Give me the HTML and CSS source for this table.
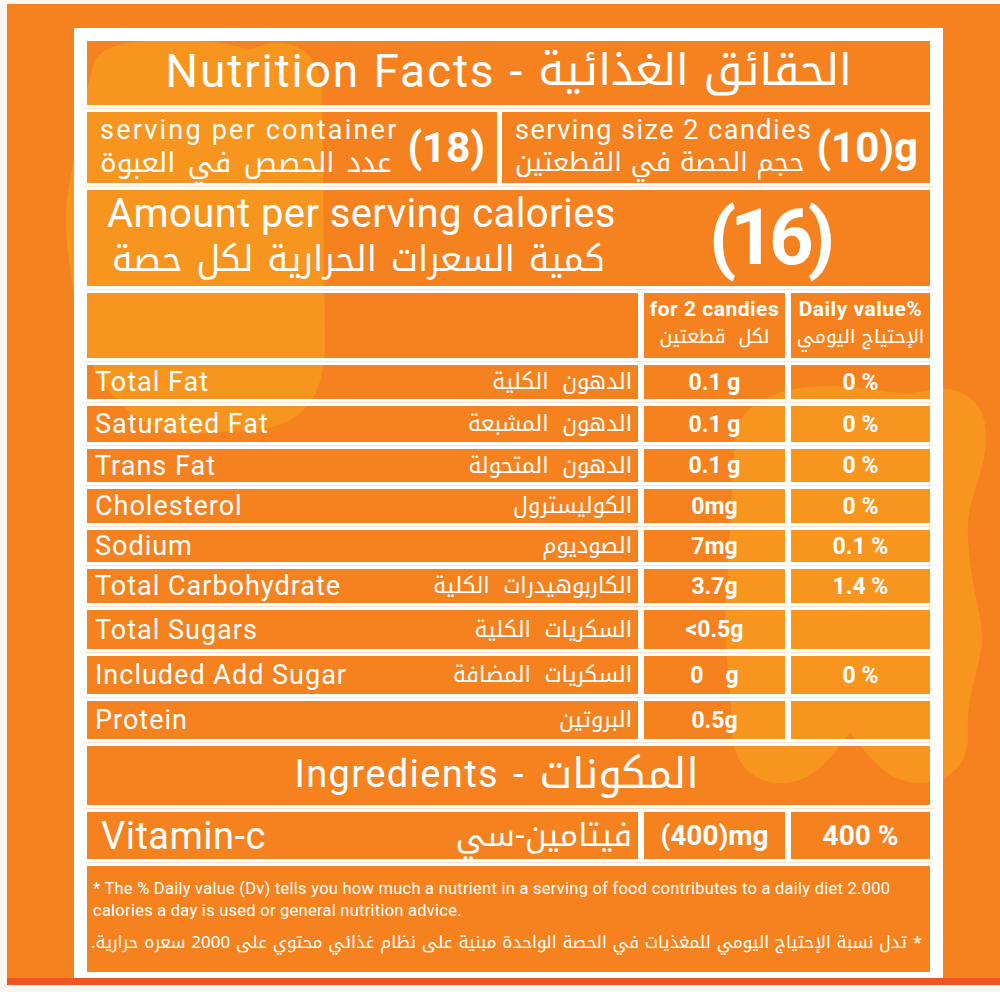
FILE: index.html
```html
<!DOCTYPE html>
<html lang="en">
<head>
<meta charset="utf-8">
<title>Nutrition Facts</title>
<link rel="stylesheet" href="styles.css">
</head>
<body>
<div class="page">
  <svg class="blobs" viewBox="7 4 993 988" width="993" height="988" aria-hidden="true">
    <path d="M95 60 C110 38 150 40 200 41 C240 42 245 55 262 45 C290 38 318 48 322 90 L325 340 C326 400 300 428 250 430 C200 432 180 440 150 425 C110 405 80 360 75 300 C68 260 62 220 70 180 C78 140 85 90 95 60 Z"/>
    <path d="M735 440 C738 398 790 384 840 386 C880 388 900 398 930 390 C962 384 988 402 986 440 C984 480 965 500 968 540 C972 600 986 620 981 650 C976 680 966 700 968 736 C968 768 945 783 920 783 C890 783 872 762 850 732 C828 762 812 783 780 783 C752 783 732 762 732 728 C732 690 722 640 726 600 C729 560 732 480 735 440 Z"/>
  </svg>
  <div class="frame">
    <div class="label">
      <div class="cell title"><span class="en">Nutrition Facts</span><span class="dash">-</span><span class="ar" dir="rtl">الحقائق الغذائية</span></div>

      <div class="row serving">
        <div class="cell serve wide">
          <div class="serve-text">
            <div class="en">serving per container</div>
            <div class="ar" dir="rtl">عدد الحصص في العبوة</div>
          </div>
          <div class="serve-num">(18)</div>
        </div>
        <div class="cell serve">
          <div class="serve-text">
            <div class="en">serving size 2 candies</div>
            <div class="ar" dir="rtl">حجم الحصة في القطعتين</div>
          </div>
          <div class="serve-num">(10)g</div>
        </div>
      </div>

      <div class="cell calories">
        <div class="cal-text">
          <div class="en">Amount per serving calories</div>
          <div class="ar" dir="rtl">كمية السعرات الحرارية لكل حصة</div>
        </div>
        <div class="cal-num">(16)</div>
      </div>

      <div class="row cols">
        <div class="cell"></div>
        <div class="cell head">
          <div class="en">for 2 candies</div>
          <div class="ar" dir="rtl">لكل&nbsp;&nbsp;قطعتين</div>
        </div>
        <div class="cell head">
          <div class="en">Daily value%</div>
          <div class="ar" dir="rtl">الإحتياج اليومي</div>
        </div>
      </div>

      <div class="row cols">
        <div class="cell name"><span class="en">Total Fat</span><span class="ar" dir="rtl">الدهون الكلية</span></div>
        <div class="cell val">0.1 g</div>
        <div class="cell val">0 %</div>
      </div>
      <div class="row cols">
        <div class="cell name"><span class="en">Saturated Fat</span><span class="ar" dir="rtl">الدهون المشبعة</span></div>
        <div class="cell val">0.1 g</div>
        <div class="cell val">0 %</div>
      </div>
      <div class="row cols">
        <div class="cell name"><span class="en">Trans Fat</span><span class="ar" dir="rtl">الدهون المتحولة</span></div>
        <div class="cell val">0.1 g</div>
        <div class="cell val">0 %</div>
      </div>
      <div class="row cols">
        <div class="cell name"><span class="en">Cholesterol</span><span class="ar" dir="rtl">الكوليسترول</span></div>
        <div class="cell val">0mg</div>
        <div class="cell val">0 %</div>
      </div>
      <div class="row cols">
        <div class="cell name"><span class="en">Sodium</span><span class="ar" dir="rtl">الصوديوم</span></div>
        <div class="cell val">7mg</div>
        <div class="cell val">0.1 %</div>
      </div>
      <div class="row cols">
        <div class="cell name"><span class="en">Total Carbohydrate</span><span class="ar" dir="rtl">الكاربوهيدرات الكلية</span></div>
        <div class="cell val">3.7g</div>
        <div class="cell val">1.4 %</div>
      </div>
      <div class="row cols">
        <div class="cell name"><span class="en">Total Sugars</span><span class="ar" dir="rtl">السكريات الكلية</span></div>
        <div class="cell val">&lt;0.5g</div>
        <div class="cell val"></div>
      </div>
      <div class="row cols">
        <div class="cell name"><span class="en">Included Add Sugar</span><span class="ar" dir="rtl">السكريات المضافة</span></div>
        <div class="cell val">0<span class="gap"></span>g</div>
        <div class="cell val">0 %</div>
      </div>
      <div class="row cols">
        <div class="cell name"><span class="en">Protein</span><span class="ar" dir="rtl">البروتين</span></div>
        <div class="cell val">0.5g</div>
        <div class="cell val"></div>
      </div>

      <div class="cell ingredients"><span class="en">Ingredients</span><span class="dash">-</span><span class="ar" dir="rtl">المكونات</span></div>

      <div class="row cols vitamin">
        <div class="cell name"><span class="en">Vitamin-c</span><span class="ar" dir="rtl">فيتامين-سي</span></div>
        <div class="cell val">(400)mg</div>
        <div class="cell val">400 %</div>
      </div>

      <div class="cell footer">
        <p class="note-en">* The % Daily value (Dv) tells you how much a nutrient in a serving of food contributes to a daily diet 2.000 calories a day is used or general nutrition advice.</p>
        <p class="note-ar" dir="rtl">* تدل نسبة الإحتياج اليومي للمغذيات في الحصة الواحدة مبنية على نظام غذائي محتوي على 2000 سعره حرارية.</p>
      </div>
    </div>
  </div>
</div>
</body>
</html>
```

FILE: styles.css
```css
html, body {
  margin: 0;
  padding: 0;
  background: #fdf6f0;
}

body {
  font-family: "Roboto", "Noto Sans", "DejaVu Sans", sans-serif;
  color: #fff;
}

.page {
  position: relative;
  margin: 4px 0 0 7px;
  height: 981px;
  padding: 24px 0 0 67px;
  box-sizing: border-box;
  background: #f5821f;
  border-bottom: 7px solid #ef5423;
  overflow: hidden;
}

.blobs {
  position: absolute;
  left: 0;
  top: 0;
  fill: #f8951e;
}

.frame {
  position: relative;
  width: 869px;
  height: 957px;
  box-sizing: border-box;
  border: 10px solid #fff;
  padding: 3px;
}

.label {
  height: 100%;
  display: grid;
  grid-template-rows: 64px 71px 96px 65px 34px 36px 33px 34px 32px 34px 39px 38px 38px 59px 47px 1fr;
  grid-template-columns: 100%;
  row-gap: 7px;
}

.cell {
  box-shadow: 0 0 0 3.5px #fff;
  min-width: 0;
  min-height: 0;
  white-space: nowrap;
}

.row {
  display: grid;
  grid-template-rows: 100%;
  column-gap: 6px;
  min-height: 0;
}

.row.serving {
  grid-template-columns: 410px 1fr;
  column-gap: 5px;
}

.row.cols {
  grid-template-columns: 551px 141px 1fr;
}

.en {
  letter-spacing: 0.8px;
}

.ar {
  font-family: "Noto Kufi Arabic", "Noto Sans Arabic", "DejaVu Sans", sans-serif;
}

.dash {
  margin: 0 16px 0 14px;
}

/* title */
.title {
  display: flex;
  align-items: center;
  justify-content: center;
  font-size: 46px;
  line-height: 56px;
  padding: 0 0 4px 0;
  box-sizing: border-box;
}

.title .en {
  letter-spacing: 1.9px;
}

.title .ar {
  font-size: 44px;
}

/* serving */
.serve {
  display: flex;
  align-items: center;
  justify-content: space-between;
  padding: 0 12px 0 13px;
}

.serve-text .en {
  font-size: 27px;
  line-height: 31px;
  letter-spacing: 1.5px;
}

.serve-text .ar {
  font-size: 26px;
  line-height: 34px;
  text-align: left;
}

.serve.wide .serve-text .en {
  letter-spacing: 2.2px;
}

.serve.wide .serve-text .ar {
  font-size: 28px;
  word-spacing: 3px;
}

.serve-num {
  font-weight: 700;
  font-size: 42px;
}

/* calories */
.calories {
  display: flex;
  align-items: center;
  padding: 0 0 0 20px;
}

.cal-text {
  width: 600px;
}

.cal-text .en {
  font-size: 40px;
  line-height: 44px;
  letter-spacing: 0.4px;
}

.cal-text .ar {
  font-size: 35px;
  line-height: 48px;
  text-align: left;
  padding-left: 5px;
  word-spacing: 2px;
}

.cal-num {
  font-weight: 700;
  font-size: 78px;
  line-height: 1;
  letter-spacing: -6px;
  margin-left: 2px;
}

/* column headers */
.head {
  display: flex;
  flex-direction: column;
  align-items: center;
  justify-content: center;
  padding-bottom: 4px;
}

.head .en {
  font-weight: 700;
  font-size: 21px;
  line-height: 26px;
  letter-spacing: 0.5px;
}

.head .ar {
  font-size: 19px;
  line-height: 30px;
}

/* nutrient rows */
.name {
  display: flex;
  align-items: center;
  justify-content: space-between;
  padding: 0 6px 0 8px;
}

.name .en {
  font-size: 27px;
  letter-spacing: 1px;
}

.name .ar {
  font-size: 22px;
  word-spacing: 6px;
}

.val {
  display: flex;
  align-items: center;
  justify-content: center;
  font-weight: 700;
  font-size: 23px;
}

.val .gap {
  display: inline-block;
  width: 22px;
}

/* ingredients */
.ingredients {
  display: flex;
  align-items: center;
  justify-content: center;
  font-size: 38px;
  padding: 0 24px 4px 0;
}

.ingredients .en {
  letter-spacing: 1.4px;
}

.ingredients .ar {
  font-size: 42px;
}

.vitamin .name {
  padding-left: 14px;
}

.vitamin .name .en {
  font-size: 38px;
  letter-spacing: 0.5px;
}

.vitamin .name .ar {
  font-size: 32px;
  word-spacing: 0;
}

.vitamin .val {
  font-size: 28px;
}

/* footer */
.footer {
  padding: 12px 8px 0 6px;
  white-space: normal;
}

.note-en {
  margin: 0;
  font-size: 16.5px;
  line-height: 22px;
  letter-spacing: 0.25px;
}

.note-ar {
  margin: 6px 0 0;
  font-size: 17px;
  line-height: 28px;
  text-align: right;
  white-space: nowrap;
  font-family: "Noto Kufi Arabic", "Noto Sans Arabic", "DejaVu Sans", sans-serif;
}
```
